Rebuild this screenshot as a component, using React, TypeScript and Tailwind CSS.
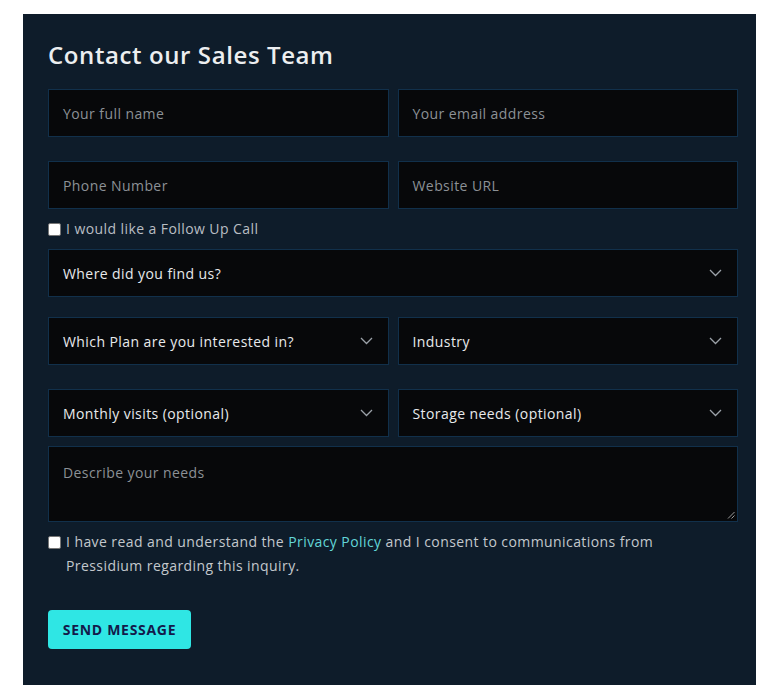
import React from "react";

const font = { fontFamily: '"Open Sans", "Noto Sans", sans-serif' };

function Chevron() {
  return (
    <svg width="13" height="8" viewBox="0 0 13 8" fill="none" className="shrink-0">
      <polyline points="1 1 6.5 6.5 12 1" stroke="#9ba1a8" strokeWidth="1.3" />
    </svg>
  );
}

function Field({ placeholder }: { placeholder: string }) {
  return (
    <div className="flex h-[48px] items-center border border-[#11304b] bg-[#07080a] px-[14px] text-[14px] tracking-[0.03em] text-[#8c9196]">
      {placeholder}
    </div>
  );
}

function Select({ label }: { label: string }) {
  return (
    <div className="flex h-[48px] items-center justify-between border border-[#11304b] bg-[#07080a] pl-[14px] pr-[15px] text-[14px] tracking-[0.03em] text-[#e8eaec]">
      <span>{label}</span>
      <Chevron />
    </div>
  );
}

function Check() {
  return <span className="mt-[4px] inline-block h-[13px] w-[13px] shrink-0 rounded-[2px] border border-[#767676] bg-white" />;
}

export default function App() {
  return (
    <div className="min-h-[700px] bg-white pt-[14px] pl-[23px]" style={font}>
      <div className="h-[671px] w-[733px] bg-[#0e1c2a] pl-[25px] pr-[18px] pt-[25px]">
        <h2 className="text-[24px] leading-[32px] font-semibold tracking-[0.025em] text-[#eceef0]">Contact our Sales Team</h2>

        <div className="mt-[18px] grid grid-cols-2 gap-[9px]">
          <Field placeholder="Your full name" />
          <Field placeholder="Your email address" />
        </div>
        <div className="mt-[24px] grid grid-cols-2 gap-[9px]">
          <Field placeholder="Phone Number" />
          <Field placeholder="Website URL" />
        </div>

        <label className="mt-[10px] flex h-[20px] items-start gap-[5px] text-[14px] leading-[20px] tracking-[0.03em] text-[#b9bec3]">
          <Check />
          <span>I would like a Follow Up Call</span>
        </label>

        <div className="mt-[10px]">
          <Select label="Where did you find us?" />
        </div>

        <div className="mt-[20px] grid grid-cols-2 gap-[9px]">
          <Select label="Which Plan are you interested in?" />
          <Select label="Industry" />
        </div>
        <div className="mt-[24px] grid grid-cols-2 gap-[9px]">
          <Select label="Monthly visits (optional)" />
          <Select label="Storage needs (optional)" />
        </div>

        <div className="relative mt-[9px] h-[76px] border border-[#11304b] bg-[#07080a] px-[14px] pt-[15px] text-[14px] tracking-[0.03em] text-[#8c9196]">
          Describe your needs
          <svg width="8" height="8" viewBox="0 0 8 8" className="absolute right-[2px] bottom-[2px]">
            <line x1="1" y1="7.5" x2="7.5" y2="1" stroke="#9a9a9a" strokeWidth="1" />
            <line x1="4.5" y1="7.5" x2="7.5" y2="4.5" stroke="#9a9a9a" strokeWidth="1" />
          </svg>
        </div>

        <label className="mt-[8px] flex items-start gap-[5px] text-[14px] leading-[24px] tracking-[0.03em] text-[#c3c8cd]">
          <span className="mt-[2px]"><Check /></span>
          <span>
            I have read and understand the <span className="text-[#62d6d8]">Privacy Policy</span> and I consent to communications from
            <br />
            Pressidium regarding this inquiry.
          </span>
        </label>

        <button className="mt-[32px] h-[39px] w-[143px] rounded-[4px] bg-[#2fe6e4] text-[14px] font-bold tracking-[0.05em] text-[#131a4a]">
          SEND MESSAGE
        </button>
      </div>
    </div>
  );
}
